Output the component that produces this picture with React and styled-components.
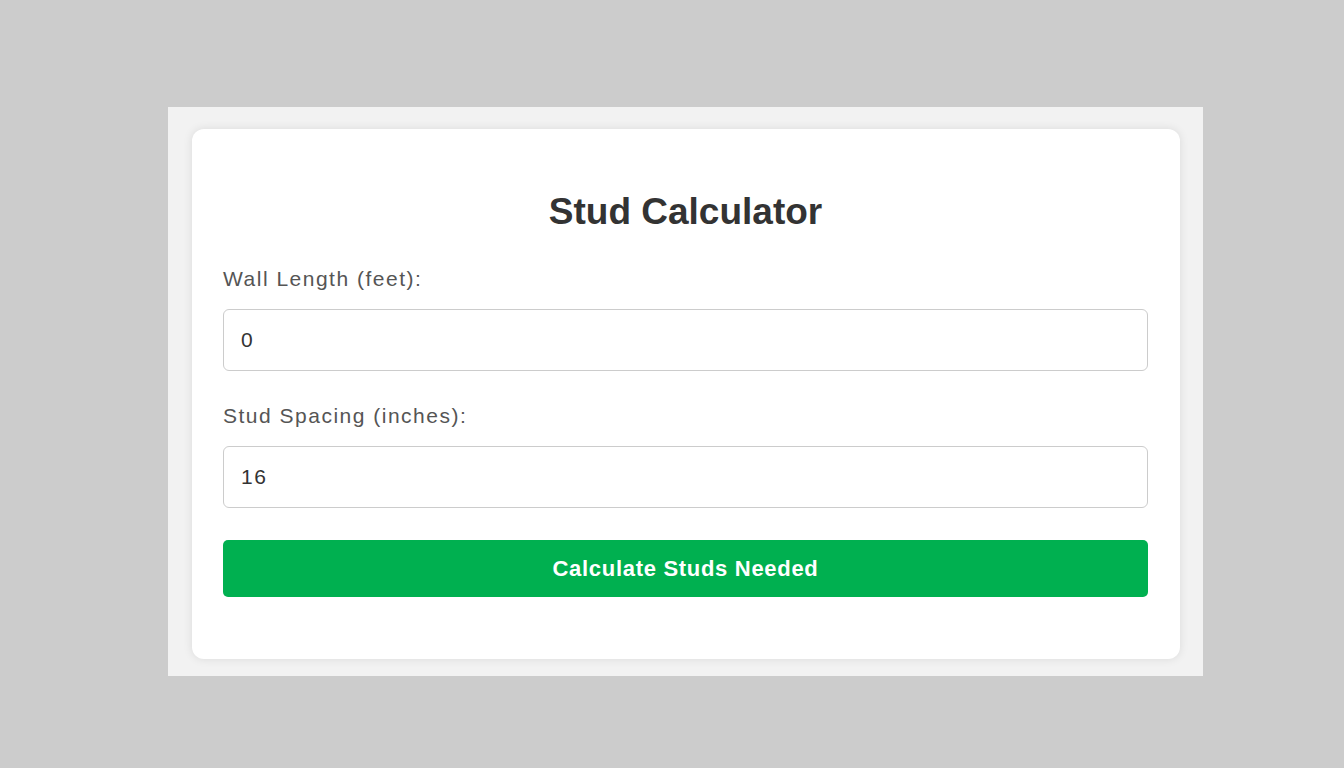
import React, { useState } from 'react';
import styled, { createGlobalStyle } from 'styled-components';

// Estilos globais
const GlobalStyle = createGlobalStyle`
    body {
        margin: 0;
        background-color: #cccccc;
        font-family: "Liberation Sans", Arial, sans-serif;
    }
`;

const Page = styled.div`
    padding: 107px 0 0 168px;
    min-height: 768px;
    box-sizing: border-box;
`;

const Frame = styled.div`
    width: 1035px;
    box-sizing: border-box;
    background-color: #f2f2f2;
    padding: 22px 23px 17px 24px;
`;

const Card = styled.div`
    background-color: #ffffff;
    border-radius: 12px;
    box-shadow: 0 0 10px rgba(0, 0, 0, 0.1);
    padding: 31px 32px 62px 31px;
    display: flex;
    flex-direction: column;
`;

const Title = styled.h1`
    margin: 31px 0 33px 0;
    text-align: center;
    font-size: 37px;
    line-height: 42px;
    font-weight: bold;
    color: #333333;
`;

const Label = styled.label`
    display: block;
    font-size: 21px;
    line-height: 23px;
    letter-spacing: 1.5px;
    color: #555555;
    margin: 1px 0 19px 0;
`;

const Input = styled.input`
    height: 62px;
    box-sizing: border-box;
    width: 100%;
    padding: 0 17px;
    border: 1px solid #cccccc;
    border-radius: 6px;
    font-family: inherit;
    font-size: 21px;
    letter-spacing: 1.5px;
    color: #333333;
    margin-bottom: 32px;
    outline: none;
`;

const Button = styled.button`
    height: 57px;
    width: 100%;
    border: none;
    border-radius: 5px;
    background-color: #00b050;
    color: #ffffff;
    font-family: inherit;
    font-size: 22px;
    letter-spacing: 0.7px;
    font-weight: bold;
    cursor: pointer;
`;

const App = () => {
    const [length, setLength] = useState('0');
    const [spacing, setSpacing] = useState('16');

    return (
        <>
            <GlobalStyle />
            <Page>
                <Frame>
                    <Card>
                        <Title>Stud Calculator</Title>
                        <Label htmlFor="wallLength">Wall Length (feet):</Label>
                        <Input id="wallLength" type="number" value={length} onChange={(e) => setLength(e.target.value)} />
                        <Label htmlFor="studSpacing">Stud Spacing (inches):</Label>
                        <Input id="studSpacing" type="number" value={spacing} onChange={(e) => setSpacing(e.target.value)} />
                        <Button>Calculate Studs Needed</Button>
                    </Card>
                </Frame>
            </Page>
        </>
    );
};

export default App;
